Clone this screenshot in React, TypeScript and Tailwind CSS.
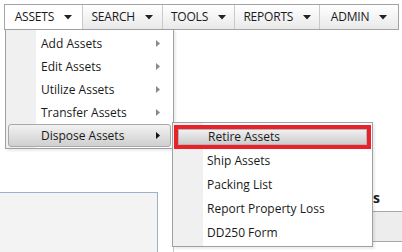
import React from 'react';

const font = { fontFamily: '"Open Sans", "Noto Sans", sans-serif' };

const topItems = [
    { label: 'ASSETS', w: 'w-[77px]', active: true },
    { label: 'SEARCH', w: 'w-[80px]' },
    { label: 'TOOLS', w: 'w-[73px]' },
    { label: 'REPORTS', w: 'w-[85px]' },
    { label: 'ADMIN', w: 'w-[79px]' },
];

const assetItems = ['Add Assets', 'Edit Assets', 'Utilize Assets', 'Transfer Assets', 'Dispose Assets'];
const disposeItems = ['Retire Assets', 'Ship Assets', 'Packing List', 'Report Property Loss', 'DD250 Form'];

function Caret() {
    return (
        <svg width="8" height="5" viewBox="0 0 8 5" className="shrink-0">
            <path d="M0 0h8L4 4.5z" fill="#222" />
        </svg>
    );
}

function SubArrow({ dark }: { dark?: boolean }) {
    return (
        <svg width="4" height="7" viewBox="0 0 4 7" className="shrink-0">
            <path d="M0 0l4 3.5L0 7z" fill={dark ? '#111' : '#8a8a8a'} />
        </svg>
    );
}

export default function App() {
    return (
        <div className="relative w-[402px] h-[252px] overflow-hidden bg-white text-[#1a1a1a]" style={font}>
            {/* Barre de menu */}
            <div className="pt-[4px] pl-[4px] pr-[3px]">
                <div className="flex h-[26px] border border-[#a3a3a3] bg-gradient-to-b from-white to-[#e9e9e9]">
                    {topItems.map((it, i) => (
                        <div
                            key={it.label}
                            className={`${it.w} flex items-center justify-center gap-[10px] text-[12px] tracking-[-0.2px] ${i > 0 ? 'border-l border-[#c9c9c9]' : ''} ${it.active ? 'bg-white' : ''}`}
                        >
                            <span>{it.label}</span>
                            <Caret />
                        </div>
                    ))}
                </div>
            </div>

            {/* Contenu de fond */}
            <div className="flex mt-[162px]">
                <div className="w-[158px] h-[60px] border-t border-r border-[#9fb0cf] bg-[#f3f3f3]" />
                <div className="flex-1 flex flex-col items-end">
                    <div className="h-[20px] pr-[22px] text-[14px] font-bold leading-[20px] mt-[-4px]">Users</div>
                    <div className="mt-[3px] w-[40px] h-[31px] border-t border-b border-[#a9a9a9] bg-[#ededed]" />
                </div>
            </div>
            <div className="absolute left-[173px] top-[244px] h-[8px] border-l border-[#c8c8c8]" />

            {/* Menu ASSETS */}
            <div className="absolute left-[5px] top-[29px] w-[169px] border border-[#a0a0a0] bg-white pt-[2px] pb-[1px] shadow-[2px_2px_2px_rgba(0,0,0,0.08)]">
                <div className="absolute left-0 top-0 bottom-0 w-[30px] bg-[#f0f0f0]" />
                {assetItems.map((label, i) => {
                    const hot = i === assetItems.length - 1;
                    return (
                        <div key={label} className="relative h-[23px] px-[2px]">
                            <div
                                className={`h-full flex items-center pl-[32px] pr-[10px] text-[12px] rounded-[3px] ${hot ? 'border border-[#a8a8a8] bg-gradient-to-b from-[#f2f2f2] to-[#cfcfcf]' : 'border border-transparent'}`}
                            >
                                <span className="flex-1">{label}</span>
                                <SubArrow dark={hot} />
                            </div>
                        </div>
                    );
                })}
            </div>

            {/* Sous-menu Dispose */}
            <div className="absolute left-[172px] top-[122px] w-[201px] border border-[#a0a0a0] bg-white pt-[2px] pb-[1px] shadow-[2px_2px_2px_rgba(0,0,0,0.08)]">
                <div className="absolute left-0 top-0 bottom-0 w-[30px] bg-[#f0f0f0]" />
                {disposeItems.map((label, i) => (
                    <div key={label} className="relative h-[24px] px-[1px]">
                        {i === 0 ? (
                            <div className="h-full border-[4px] border-[#e8212b]">
                                <div className="h-full flex items-center pl-[29px] text-[12px] bg-gradient-to-b from-[#f0f0f0] to-[#cdcdcd] border border-[#b5b5b5]">
                                    {label}
                                </div>
                            </div>
                        ) : (
                            <div className="h-full flex items-center pl-[33px] text-[12px]">{label}</div>
                        )}
                    </div>
                ))}
            </div>
        </div>
    );
}
